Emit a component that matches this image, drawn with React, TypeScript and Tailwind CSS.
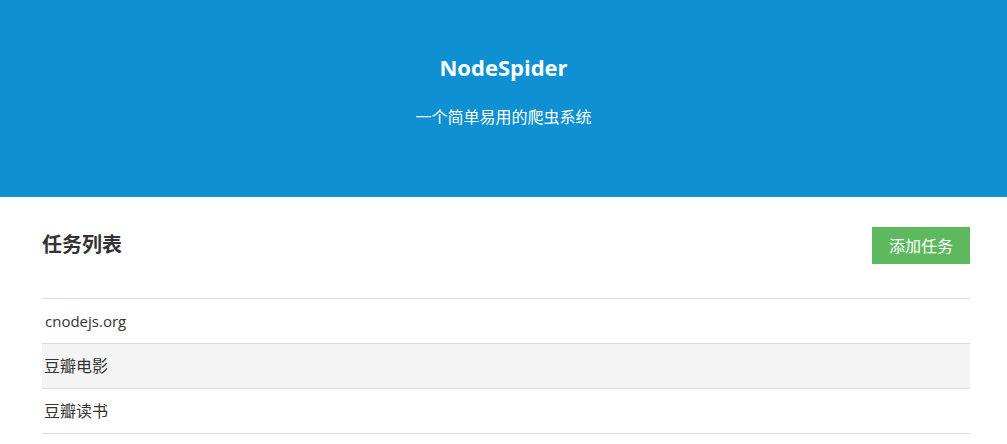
const tasks = [
  { name: 'cnodejs.org', cjk: false },
  { name: '豆瓣电影', cjk: true },
  { name: '豆瓣读书', cjk: true }
]

export default function App() {
  return (
    <div className="min-h-[444px] bg-white font-['Open_Sans','Noto_Sans_CJK_SC',sans-serif] text-[#333]">
      <header className="flex h-[197px] flex-col items-center bg-[#0e90d2] pt-[50px] text-white">
        <h1 className="text-[22px] font-bold leading-[34px]">NodeSpider</h1>
        <p className="mt-[16px] text-[16px] leading-[34px]">一个简单易用的爬虫系统</p>
      </header>
      <main className="ml-[42px] w-[928px]">
        <div className="flex items-start justify-between pt-[30px]">
          <h2 className="pt-[4px] text-[20px] font-bold leading-[28px]">任务列表</h2>
          <button className="h-[37px] w-[98px] bg-[#5eb95e] text-[16px] text-white">添加任务</button>
        </div>
        <table className="mt-[34px] w-full border-collapse">
          <tbody>
            {tasks.map((t, i) => (
              <tr key={t.name} className={i % 2 === 1 ? 'bg-[#f4f4f4]' : ''}>
                <td
                  className={
                    'h-[45px] border-y border-[#dddddd] leading-[24px] ' +
                    (t.cjk ? 'px-[2px] text-[16px]' : 'px-[3px] text-[15px]')
                  }
                >
                  {t.name}
                </td>
              </tr>
            ))}
          </tbody>
        </table>
      </main>
    </div>
  )
}
